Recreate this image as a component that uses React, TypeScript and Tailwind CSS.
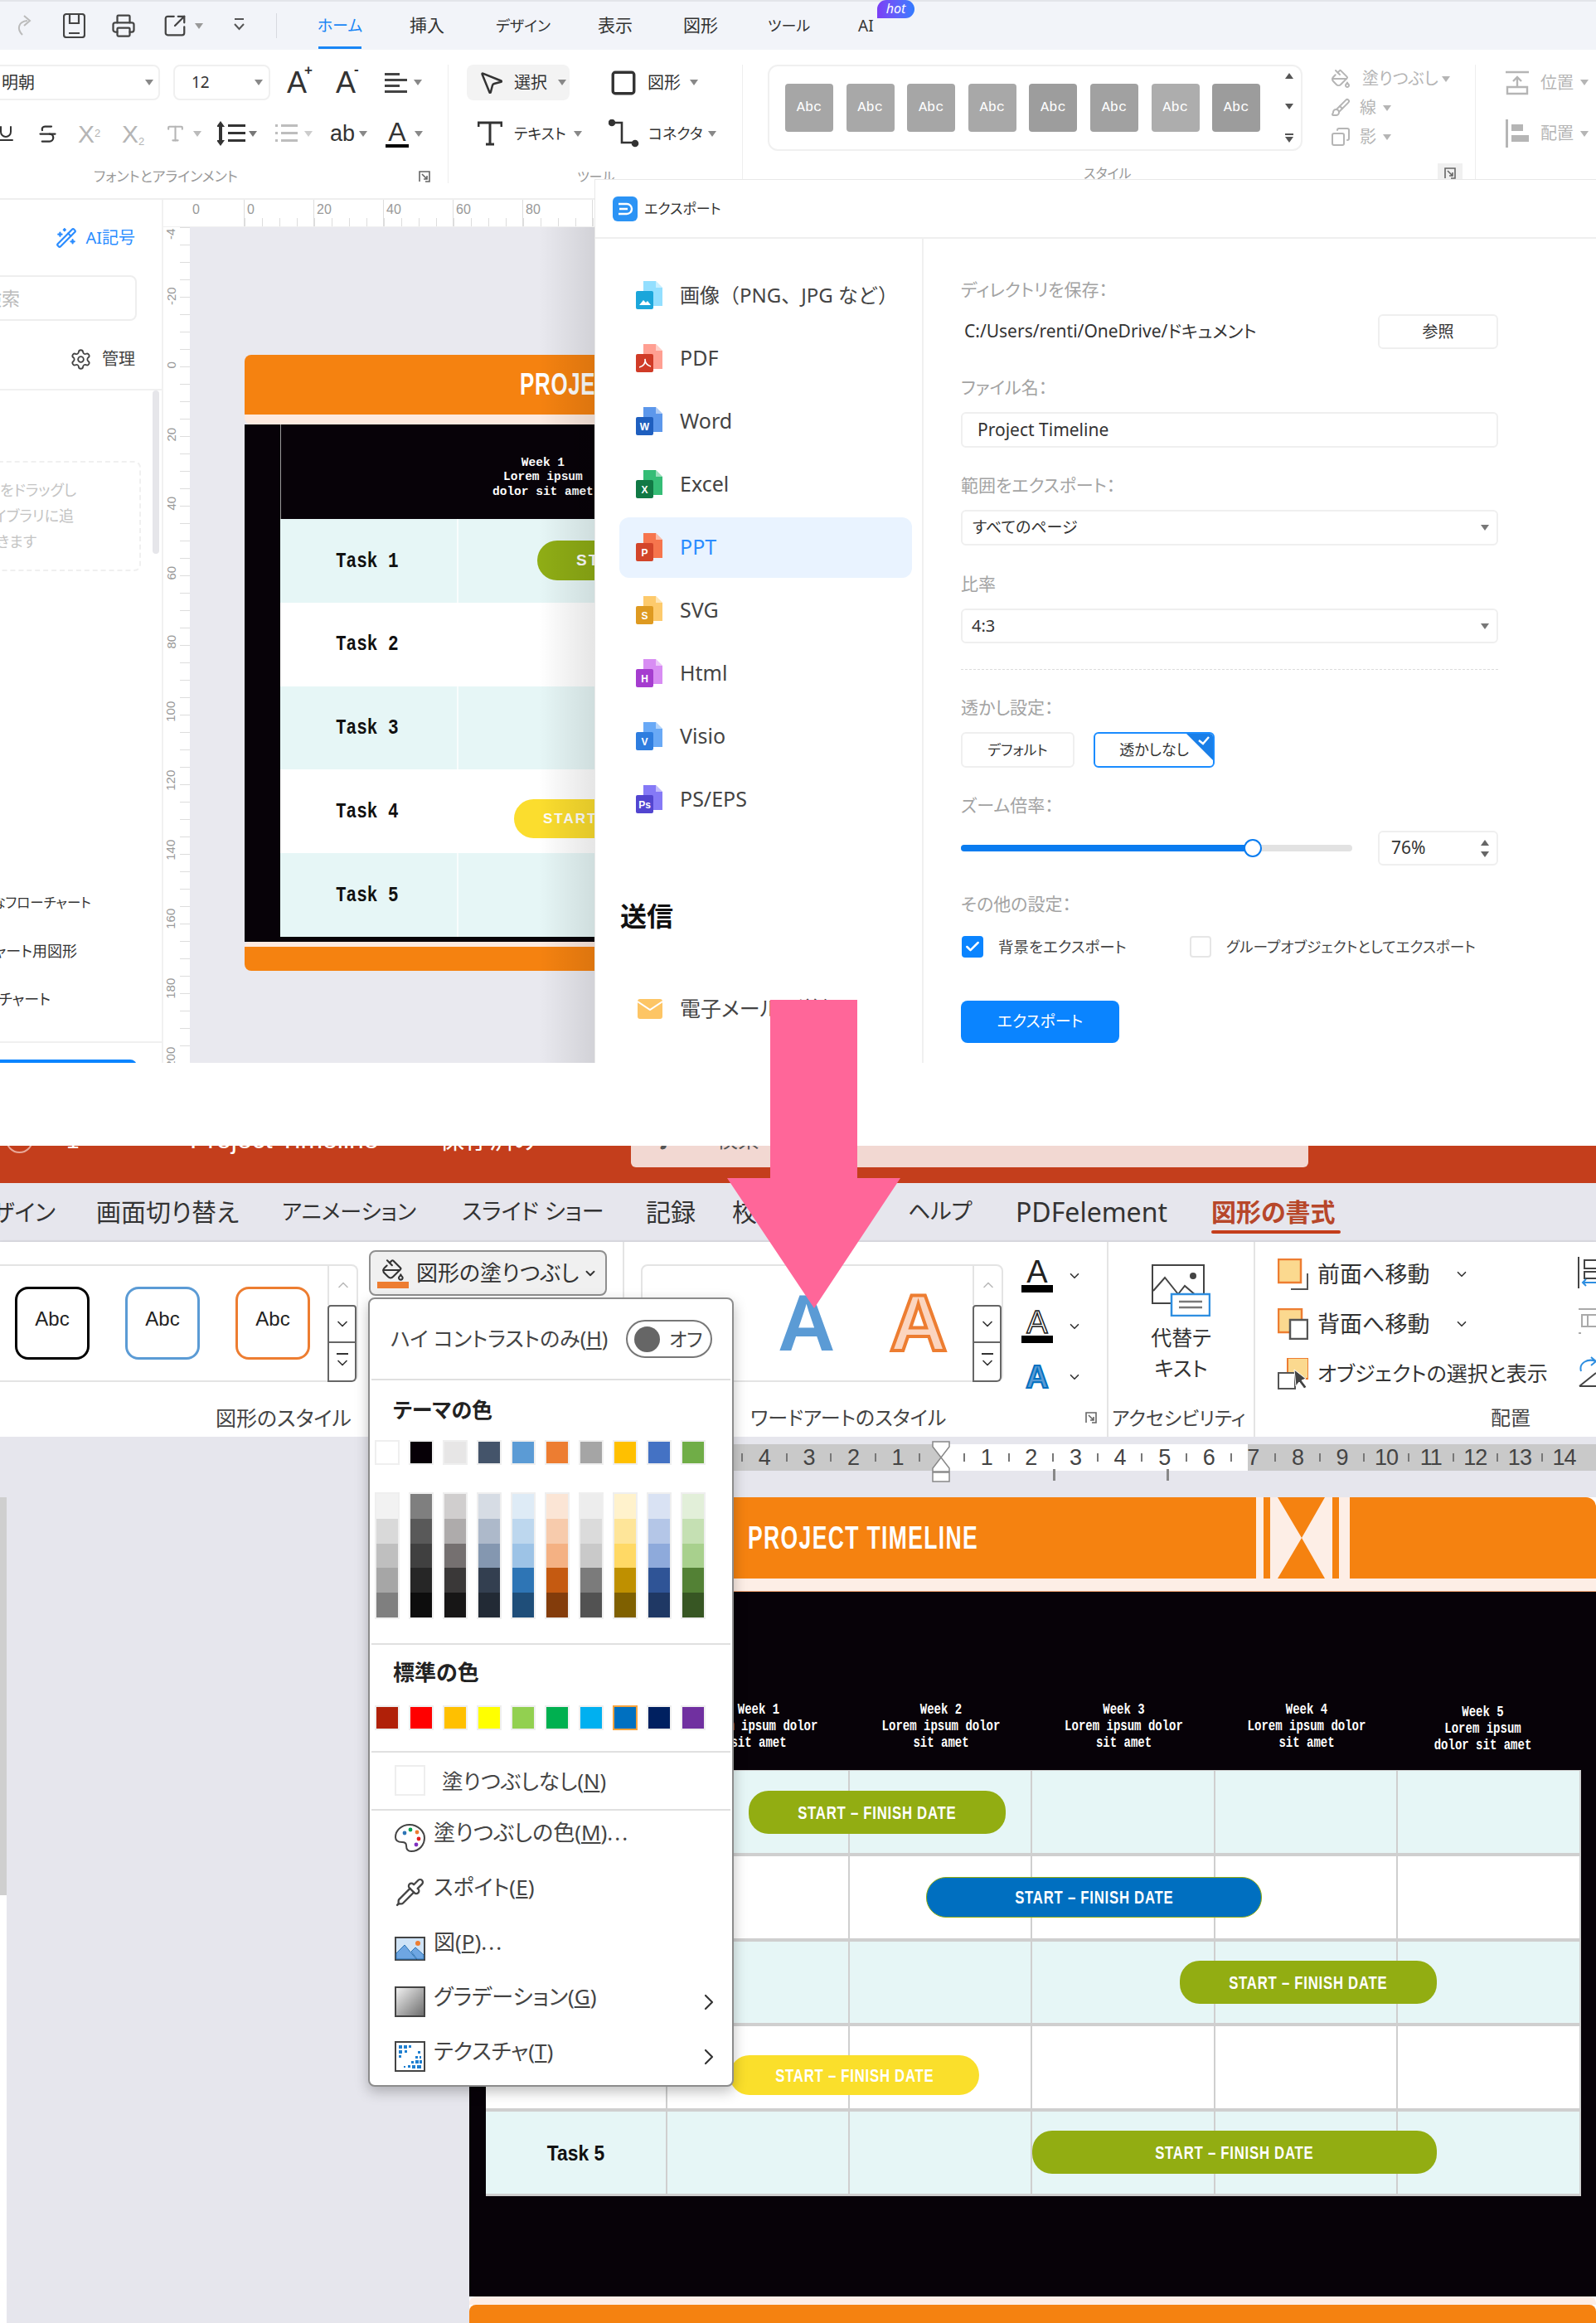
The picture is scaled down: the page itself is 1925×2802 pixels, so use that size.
import { ChevronDown, ChevronRight, ChevronUp, Pipette, Printer, Settings, SquareArrowOutUpRight, WandSparkles, Check, Strikethrough, Underline, MousePointer2, Square, Type, PaintBucket, Brush, Copy } from "lucide-react";
import clsx from "clsx";
import { ReactNode } from "react";

const Caret = ({ className }: { className?: string }) => (
  <svg width="10" height="7" viewBox="0 0 10 7" className={clsx("shrink-0", className)}>
    <path d="M0 0h10L5 7z" fill="currentColor" />
  </svg>
);

// squeezed display type used on the slide
const Cond = ({ children, className }: { children: ReactNode; className?: string }) => (
  <span className={clsx("inline-block whitespace-nowrap font-['Liberation_Sans'] font-bold", className)}>{children}</span>
);

const Launcher = ({ className }: { className?: string }) => (
  <svg width="16" height="16" viewBox="0 0 16 16" className={className} fill="none" stroke="#666" strokeWidth="1.6">
    <path d="M2 14V2h12v12H9" />
    <path d="M5 5l6 6M11 7v4H7" />
  </svg>
);

const FILES = [
  { name: "画像（PNG、JPG など）", back: "#93dfff", front: "#1ba6da", ch: "" },
  { name: "PDF", back: "#ff9f92", front: "#d03b27", ch: "" },
  { name: "Word", back: "#5c97eb", front: "#1f5fbf", ch: "W" },
  { name: "Excel", back: "#35bd76", front: "#117945", ch: "X" },
  { name: "PPT", back: "#f6754d", front: "#d2452a", ch: "P" },
  { name: "SVG", back: "#fdca6c", front: "#de9a21", ch: "S" },
  { name: "Html", back: "#d88df3", front: "#a53dcf", ch: "H" },
  { name: "Visio", back: "#69a9f6", front: "#2e7ddf", ch: "V" },
  { name: "PS/EPS", back: "#8579f6", front: "#5245d0", ch: "Ps" },
];

const FileIcon = ({ back, front, ch, name }: { back: string; front: string; ch: string; name: string }) => (
  <svg width="32" height="38" viewBox="0 0 32 38" className="shrink-0">
    <path d="M9 2h15l8 8v22H9z" fill={back} />
    <path d="M24 2l8 8h-8z" fill="#fff" opacity=".5" />
    <rect x="0" y="14" width="21" height="22" rx="2" fill={front} />
    <text x="10.5" y="30" textAnchor="middle" fontSize="12" fontWeight="700" fill="#fff" fontFamily="Liberation Sans">
      {ch}
    </text>
    {name === "PDF" && <path d="M4 30c5-1 8-5 7-10 0 5 3 8 7 9" stroke="#fff" strokeWidth="1.6" fill="none" />}
    {name.startsWith("画像") && <path d="M4 31l5-6 3 3 2-2 4 5z" fill="#fff" />}
  </svg>
);

const Label = ({ children, className }: { children: ReactNode; className?: string }) => (
  <div className={clsx("h-[24px] leading-[24px] text-[21px] text-[#a3a3a3] whitespace-nowrap", className)}>{children}</div>
);

const Box = ({ children, className }: { children?: ReactNode; className?: string }) => (
  <div className={clsx("flex items-center border-2 border-[#efefef] rounded-md text-[#333]", className)}>{children}</div>
);

const ExportDialog = () => (
  <div className="absolute left-[717px] top-[216px] right-0 bottom-0 bg-white border-l border-t border-[#e8e8e8] flex flex-col">
    <div className="h-[71px] shrink-0 border-b-2 border-[#efefef] flex items-center pl-[21px]">
      <svg width="30" height="30" viewBox="0 0 30 30">
        <rect width="30" height="30" rx="6" fill="#2b93f5" />
        <path d="M7 9h10a6 6 0 010 12H7M8 15h10" stroke="#fff" strokeWidth="2.4" fill="none" />
      </svg>
      <span className="ml-[8px] text-[17px] text-[#333]">エクスポート</span>
    </div>
    <div className="flex flex-1 min-h-0">
      <div className="w-[396px] shrink-0 border-r-2 border-[#f0f0f0] pt-[30px]">
        {FILES.map((f) => (
          <div key={f.name} className="h-[76px] flex items-center pl-[29px]">
            <div
              className={clsx(
                "w-[353px] h-[73px] rounded-xl flex items-center pl-[20px]",
                f.name === "PPT" && "bg-[#e9f3ff]"
              )}
            >
              <FileIcon back={f.back} front={f.front} ch={f.ch} name={f.name} />
              <span
                className={clsx(
                  "ml-[21px] whitespace-nowrap",
                  f.name === "PPT" ? "text-[#2a8cff]" : "text-[#444]",
                  f.name.startsWith("画像") ? "text-[24px] [font-feature-settings:normal]" : "text-[25px]"
                )}
              >
                {f.name}
              </span>
            </div>
          </div>
        ))}
        <div className="mt-[79px] ml-[30px] h-[48px] leading-[48px] text-[32px] font-bold text-[#111]">送信</div>
        <div className="mt-[50px] h-[76px] flex items-center pl-[51px]">
          <svg width="30" height="24" viewBox="0 0 30 24">
            <rect width="30" height="24" rx="3" fill="#fdc565" />
            <path d="M0 3l15 10L30 3" stroke="#fff" strokeWidth="2" fill="none" />
          </svg>
          <span className="ml-[21px] text-[25px] text-[#444] whitespace-nowrap">電子メールで送信</span>
        </div>
      </div>
      <div className="flex-1 pl-[45px] pt-[49px]">
        <div className="w-[648px]">
          <Label>ディレクトリを保存：</Label>
          <div className="mt-[18px] h-[42px] flex items-center">
            <span className="ml-[4px] text-[21px] text-[#333] whitespace-nowrap">C:/Users/renti/OneDrive/ドキュメント</span>
            <Box className="ml-auto w-[145px] h-[42px] justify-center text-[19px]">参照</Box>
          </div>
          <Label className="mt-[34px]">ファイル名：</Label>
          <Box className="mt-[18px] h-[43px] pl-[18px] text-[21px]">Project Timeline</Box>
          <Label className="mt-[33px]">範囲をエクスポート：</Label>
          <Box className="mt-[18px] h-[43px] pl-[12px] pr-[9px] justify-between text-[19px]">
            すべてのページ
            <Caret className="text-[#777]" />
          </Box>
          <Label className="mt-[34px]">比率</Label>
          <Box className="mt-[18px] h-[42px] pl-[11px] pr-[9px] justify-between text-[20px]">
            4:3
            <Caret className="text-[#777]" />
          </Box>
          <div className="mt-[31px] border-t border-dashed border-[#dcdcdc]" />
          <Label className="mt-[33px]">透かし設定：</Label>
          <div className="mt-[18px] flex gap-[23px]">
            <Box className="w-[137px] h-[43px] justify-center text-[17px]">デフォルト</Box>
            <div className="relative w-[146px] h-[43px] border-2 border-[#1a8cff] rounded-md flex items-center justify-center text-[18px] text-[#333] overflow-hidden">
              透かしなし
              <svg width="32" height="32" viewBox="0 0 32 32" className="absolute right-0 top-0">
                <path d="M0 0h32v32z" fill="#1a7fe8" />
                <path d="M15 8l5 4 7-8" stroke="#fff" strokeWidth="2.4" fill="none" />
              </svg>
            </div>
          </div>
          <Label className="mt-[33px]">ズーム倍率：</Label>
          <div className="mt-[19px] h-[42px] flex items-center">
            <div className="relative w-[472px] h-[8px] rounded-full bg-[#e2e2e2]">
              <div className="h-full w-[352px] rounded-full bg-[#0a7cf0]" />
              <div className="absolute left-[341px] top-[-7px] w-[22px] h-[22px] rounded-full bg-white border-2 border-[#0a7cf0]" />
            </div>
            <Box className="ml-auto w-[145px] h-[42px] pl-[14px] pr-[9px] justify-between text-[21px]">
              76%
              <span className="flex flex-col gap-[7px] text-[#666]">
                <Caret className="rotate-180" />
                <Caret />
              </span>
            </Box>
          </div>
          <Label className="mt-[34px]">その他の設定：</Label>
          <div className="mt-[27px] h-[26px] flex items-center text-[#444]">
            <span className="ml-[1px] w-[26px] h-[26px] rounded-[4px] bg-[#0a84ff] flex items-center justify-center">
              <Check size={20} color="#fff" strokeWidth={3} />
            </span>
            <span className="ml-[18px] w-[231px] whitespace-nowrap text-[18.5px]">背景をエクスポート</span>
            <span className="w-[26px] h-[26px] rounded-[4px] border-2 border-[#e6e6e6]" />
            <span className="ml-[18px] whitespace-nowrap text-[17.7px]">グループオブジェクトとしてエクスポート</span>
          </div>
          <div className="mt-[52px] w-[191px] h-[51px] rounded-lg bg-[#0a84ff] text-white text-[19px] flex items-center justify-center">
            エクスポート
          </div>
        </div>
      </div>
    </div>
  </div>
);

const TopBar = () => (
  <div className="h-[60px] bg-[#f2f4f9] border-t-2 border-[#e3e5ea] flex items-center relative text-[#333]">
    <svg width="22" height="26" viewBox="0 0 22 26" className="ml-[19px] text-[#bbb]" fill="none" stroke="currentColor" strokeWidth="2">
      <path d="M8 24C1 17 3 8 14 7M10 1l7 6-7 6" />
    </svg>
    <svg width="27" height="30" viewBox="0 0 27 30" className="ml-[35px]" fill="none" stroke="#444" strokeWidth="2.2">
      <path d="M4 1h19a3 3 0 013 3v22a3 3 0 01-3 3H4a3 3 0 01-3-3V4a3 3 0 013-3zM8 1v11h11V1M7 24h13" />
    </svg>
    <Printer size={30} strokeWidth={1.8} className="ml-[31px] text-[#444]" />
    <SquareArrowOutUpRight size={30} strokeWidth={1.8} className="ml-[32px] text-[#444]" />
    <Caret className="ml-[9px] text-[#999]" />
    <svg width="13" height="20" viewBox="0 0 13 20" className="ml-[37px]" fill="none" stroke="#555" strokeWidth="2">
      <path d="M1 2h11M1 8l5.5 6L12 8" />
    </svg>
    <div className="ml-[38px] w-px h-[30px] bg-[#d8dae0]" />
    <div className="ml-[50px] w-[52px] h-full relative flex items-center justify-center text-[19px] text-[#1a86f5] whitespace-nowrap">
      ホーム
      <span className="absolute left-0 right-0 bottom-[1px] h-[3px] bg-[#1a86f5]" />
    </div>
    <span className="ml-[58px] w-[45px] text-[21px] whitespace-nowrap">挿入</span>
    <span className="ml-[59px] w-[63px] text-[18px] whitespace-nowrap">デザイン</span>
    <span className="ml-[60px] w-[43px] text-[21px] whitespace-nowrap">表示</span>
    <span className="ml-[60px] w-[43px] text-[21px] whitespace-nowrap">図形</span>
    <span className="ml-[59px] w-[50px] text-[18px] whitespace-nowrap">ツール</span>
    <span className="ml-[59px] relative text-[19px]">
      AI
      <span className="absolute left-[23px] top-[-17px] w-[45px] h-[22px] rounded-t-full rounded-br-full bg-gradient-to-r from-[#7a3df5] to-[#2f7bff] text-white text-[16px] leading-[20px] italic text-center">
        hot
      </span>
    </span>
  </div>
);

const SWATCHES = ["#a6a6a6", "#a8a8a8", "#a6a6a6", "#a8a8a8", "#9d9d9d", "#a1a1a1", "#adadad", "#9c9c9c"];

const TopRibbon = () => (
  <div className="h-[181px] flex border-b-2 border-[#eeeeee] text-[#333] bg-white">
    <div className="w-[540px] shrink-0">
      <div className="mt-[18px] h-[43px] flex items-center">
        <div className="ml-[-10px] w-[203px] h-[43px] border-2 border-[#f0f0f0] rounded-lg flex items-center pl-[10px] pr-[6px] justify-between text-[20px]">
          明朝
          <Caret className="text-[#888]" />
        </div>
        <div className="ml-[16px] w-[117px] h-[43px] border-2 border-[#f0f0f0] rounded-lg flex items-center pl-[20px] pr-[7px] justify-between text-[19px]">
          12
          <Caret className="text-[#888]" />
        </div>
        <span className="ml-[20px] w-[30px] text-[36px] leading-none font-['Liberation_Sans'] relative">
          A<span className="absolute left-[21px] top-[-6px] text-[17px] font-bold">+</span>
        </span>
        <span className="ml-[29px] w-[29px] text-[36px] leading-none font-['Liberation_Sans'] relative">
          A<span className="absolute left-[22px] top-[-7px] text-[17px] font-bold">-</span>
        </span>
        <svg width="27" height="24" viewBox="0 0 27 24" className="ml-[30px]" fill="#444">
          <path d="M0 0h18v3H0zM0 7h27v3H0zM0 14h18v3H0zM0 21h27v3H0z" />
        </svg>
        <Caret className="ml-[8px] text-[#888]" />
      </div>
      <div className="mt-[20px] h-[40px] flex items-center">
        <Underline size={26} strokeWidth={2} className="ml-[-5px] w-[24px]" />
        <Strikethrough size={27} strokeWidth={2} className="ml-[25px]" />
        <span className="ml-[23px] w-[30px] text-[30px] text-[#b5b5b5] font-['Liberation_Sans'] whitespace-nowrap">
          X<sup className="text-[13px]">2</sup>
        </span>
        <span className="ml-[23px] w-[30px] text-[30px] text-[#b5b5b5] font-['Liberation_Sans'] whitespace-nowrap">
          X<sub className="text-[13px]">2</sub>
        </span>
        <Type size={28} className="ml-[22px] w-[25px] text-[#b5b5b5]" />
        <Caret className="ml-[9px] text-[#bbb]" />
        <svg width="34" height="32" viewBox="0 0 34 32" className="ml-[19px]" fill="#333">
          <path d="M13 5h21v3H13zM13 14h21v3H13zM13 23h21v3H13zM4 1l5 7H6v16h3l-5 7-5-7h3V8H-1z" />
        </svg>
        <Caret className="ml-[4px] text-[#777]" />
        <svg width="27" height="24" viewBox="0 0 27 24" className="ml-[22px]" fill="#bdbdbd">
          <path d="M0 1h3v3H0zM7 1h20v3H7zM0 10h3v3H0zM7 10h20v3H7zM0 19h3v3H0zM7 19h20v3H7z" />
        </svg>
        <Caret className="ml-[8px] text-[#ccc]" />
        <span className="ml-[21px] w-[28px] text-[27px] font-['Liberation_Sans']">ab</span>
        <Caret className="ml-[7px] text-[#888]" />
        <span className="ml-[22px] w-[28px] text-[32px] leading-[30px] font-['Liberation_Sans'] text-center border-b-[4px] border-black">A</span>
        <Caret className="ml-[7px] text-[#888]" />
      </div>
      <div className="mt-[20px] h-[24px] flex items-center">
        <span className="ml-[113px] w-[175px] text-[17px] text-[#999] whitespace-nowrap">フォントとアラインメント</span>
        <Launcher className="ml-[216px]" />
      </div>
    </div>
    <div className="w-px my-[18px] bg-[#eeeeee]" />
    <div className="w-[354px] shrink-0 pl-[22px]">
      <div className="mt-[18px] h-[43px] flex items-center">
        <div className="w-[124px] h-[43px] bg-[#f3f3f3] rounded-lg flex items-center pl-[13px]">
          <MousePointer2 size={33} strokeWidth={1.8} className="w-[33px]" />
          <span className="ml-[11px] w-[43px] text-[20px] whitespace-nowrap">選択</span>
          <Caret className="ml-[10px] text-[#888]" />
        </div>
        <Square size={34} strokeWidth={2.4} className="ml-[48px] w-[34px]" />
        <span className="ml-[12px] w-[42px] text-[20px] whitespace-nowrap">図形</span>
        <Caret className="ml-[9px] text-[#888]" />
      </div>
      <div className="mt-[20px] h-[40px] flex items-center">
        <svg width="30" height="30" viewBox="0 0 30 30" className="ml-[13px]" fill="none" stroke="#333" strokeWidth="3">
          <path d="M1 7V2h28v5M15 2v26M10 28h10" />
        </svg>
        <span className="ml-[14px] w-[62px] text-[18px] whitespace-nowrap">テキスト</span>
        <Caret className="ml-[10px] text-[#888]" />
        <svg width="37" height="34" viewBox="0 0 37 34" className="ml-[32px]" fill="none" stroke="#333" strokeWidth="2.6">
          <path d="M5 4h11v24h15" />
          <circle cx="4" cy="4" r="3" fill="#333" />
          <circle cx="32" cy="29" r="3" fill="#333" />
        </svg>
        <span className="ml-[11px] w-[64px] text-[18px] whitespace-nowrap">コネクタ</span>
        <Caret className="ml-[8px] text-[#888]" />
      </div>
      <div className="mt-[20px] ml-[133px] h-[24px] text-[16px] text-[#999]">ツール</div>
    </div>
    <div className="w-px my-[18px] bg-[#eeeeee]" />
    <div className="w-[883px] shrink-0">
      <div className="mt-[18px] h-[104px] flex">
        <div className="ml-[30px] w-[645px] h-[104px] border-2 border-[#f0f0f0] rounded-xl flex items-center pl-[19px]">
          <div className="flex gap-[15.6px]">
            {SWATCHES.map((c, i) => (
              <div
                key={i}
                className="w-[58px] h-[58px] rounded-[4px] flex items-center justify-center text-[17px] text-white font-['Liberation_Mono']"
                style={{ backgroundColor: c }}
              >
                Abc
              </div>
            ))}
          </div>
          <div className="ml-auto mr-[9px] h-[84px] flex flex-col justify-between items-center text-[#555]">
            <Caret className="rotate-180" />
            <Caret />
            <span className="flex flex-col items-center gap-[2px]">
              <span className="w-[10px] h-[2px] bg-[#555]" />
              <Caret />
            </span>
          </div>
        </div>
        <div className="ml-[34px] h-[104px] flex flex-col text-[#b5b5b5]">
          <div className="h-[34px] flex items-center">
            <PaintBucket size={26} className="w-[24px]" />
            <span className="ml-[14px] text-[20px] whitespace-nowrap w-[86px]">塗りつぶし</span>
            <Caret className="ml-[10px]" />
          </div>
          <div className="h-[36px] flex items-center">
            <Brush size={24} className="w-[24px]" />
            <span className="ml-[11px] text-[20px] w-[21px]">線</span>
            <Caret className="ml-[7px]" />
          </div>
          <div className="h-[34px] flex items-center">
            <Copy size={24} className="w-[24px] -scale-x-100" />
            <span className="ml-[11px] text-[20px] w-[21px]">影</span>
            <Caret className="ml-[7px]" />
          </div>
        </div>
      </div>
      <div className="mt-[15px] h-[24px] flex">
        <span className="ml-[411px] w-[63px] text-[16px] text-[#999] whitespace-nowrap">スタイル</span>
        <div className="ml-[364px] w-[30px] h-[24px] bg-[#f0f0f0] flex items-center justify-center">
          <Launcher />
        </div>
      </div>
    </div>
    <div className="w-px my-[18px] bg-[#eeeeee]" />
    <div className="flex-1 pl-[36px] text-[#b5b5b5]">
      <div className="mt-[18px] h-[43px] flex items-center">
        <svg width="28" height="30" viewBox="0 0 28 30" fill="none" stroke="currentColor" strokeWidth="2.4">
          <path d="M0 2h28M14 8v12M9 13l5-5 5 5M2 20h24v8H2z" />
        </svg>
        <span className="ml-[14px] w-[45px] text-[20px] whitespace-nowrap">位置</span>
        <Caret className="ml-[3px]" />
      </div>
      <div className="mt-[20px] h-[40px] flex items-center">
        <svg width="28" height="34" viewBox="0 0 28 34" fill="currentColor">
          <path d="M0 0h3v34H0zM7 6h14v8H7zM7 19h21v8H7z" />
        </svg>
        <span className="ml-[14px] w-[45px] text-[20px] whitespace-nowrap">配置</span>
        <Caret className="ml-[3px]" />
      </div>
    </div>
  </div>
);

const LeftPanel = () => (
  <div className="w-[197px] shrink-0 border-r-2 border-[#f1f1f1] bg-white relative overflow-hidden">
    <div className="mt-[34px] h-[24px] flex justify-end items-center pr-[32px] text-[#2a8cff] text-[20px]">
      <WandSparkles size={26} className="mr-[10px]" />
      AI記号
    </div>
    <div className="mt-[33px] ml-[-40px] w-[205px] h-[55px] border-2 border-[#eeeeee] rounded-lg flex items-center pl-[18px] text-[22px] text-[#bbbbbb]">
      検索
    </div>
    <div className="mt-[34px] h-[24px] flex justify-end items-center pr-[32px] text-[#444] text-[20px]">
      <Settings size={27} strokeWidth={1.6} className="mr-[12px]" />
      管理
    </div>
    <div className="mt-[24px] h-[2px] bg-[#f0f0f0]" />
    <div className="mt-[85px] ml-[-30px] w-[200px] h-[133px] border-2 border-dashed border-[#f0f0f0] rounded-lg flex flex-col justify-center items-end pr-[76px] text-[18px] leading-[31px] text-[#c4c4c4] whitespace-nowrap">
      <span>図形をドラッグし</span>
      <span className="mr-[3px]">てライブラリに追</span>
      <span className="self-start ml-[-11px]">加できます</span>
    </div>
    <div className="mt-[371px] text-[18px] text-[#333] whitespace-nowrap">
      <div className="h-[58px] flex items-center justify-end pr-[85px] text-[16.5px]">基本的なフローチャート</div>
      <div className="h-[58px] flex items-center justify-end pr-[102px]">チャート用図形</div>
      <div className="h-[59px] flex items-center justify-end pr-[134px]">チャート</div>
    </div>
    <div className="mt-[21px] h-[2px] bg-[#f0f0f0]" />
    <div className="mt-[20px] ml-[-10px] w-[175px] h-[10px] rounded-t-lg bg-[#0a84ff]" />
    <div className="absolute left-[184px] top-[230px] w-[8px] h-[197px] rounded-full bg-[#e6e6ea]" />
  </div>
);

const V_LABELS = ["-20", "0", "20", "40", "60", "80", "100", "120", "140", "160", "180", "200"];
const H_LABELS = ["0", "20", "40", "60", "80", "100"];

const VRuler = () => (
  <div className="w-[32px] shrink-0 bg-white flex overflow-hidden">
    <div className="w-[20px] shrink-0 text-[15px] text-[#999] font-['Liberation_Sans']">
      <div className="h-[16px] flex items-center justify-center">
        <span className="-rotate-90">-4</span>
      </div>
      <div className="mt-[25px]" />
      {V_LABELS.map((l) => (
        <div key={l} className="h-[83.5px] flex items-center justify-center">
          <span className="-rotate-90">{l}</span>
        </div>
      ))}
    </div>
    <div className="flex-1 bg-[repeating-linear-gradient(to_bottom,#dddddd_0,#dddddd_1px,transparent_1px,transparent_21px)]" />
  </div>
);

const HRuler = () => (
  <div className="h-[33px] bg-white flex overflow-hidden border-b border-[#f0f0f0]">
    <div className="w-[32px] shrink-0" />
    <div className="w-[65px] shrink-0 pl-[3px] text-[16px] text-[#999] font-['Liberation_Sans']">0</div>
    {H_LABELS.map((l) => (
      <div key={l} className="w-[84px] shrink-0 border-l border-[#dddddd] pl-[3px] text-[16px] text-[#999] font-['Liberation_Sans'] bg-[repeating-linear-gradient(to_right,#dddddd_0,#dddddd_1px,transparent_1px,transparent_21px)] bg-[length:100%_10px] bg-bottom bg-no-repeat">
        {l}
      </div>
    ))}
  </div>
);

const TOP_ROWS = ["Task 1", "Task 2", "Task 3", "Task 4", "Task 5"];

const TopSlide = () => (
  <div className="ml-[66px] mt-[154px] w-[800px] relative">
    <div className="h-[72px] bg-[#f58210] rounded-tl-lg flex items-center pl-[332px]">
      <Cond className="text-[37px] text-white tracking-[1px] scale-x-[0.7] origin-left">PROJECT TIMELINE</Cond>
    </div>
    <div className="h-[12px] bg-[#fdeadf] rounded-bl-lg" />
    <div className="bg-[#070208] pl-[43px]">
      <div className="h-[114px] border-l border-[#999] flex items-center pl-[255px] pt-[14px]">
        <div className="text-white text-[14.5px] leading-[17.5px] font-bold font-['Liberation_Mono'] text-center whitespace-nowrap">
          <div>Week 1</div>
          <div>Lorem ipsum</div>
          <div>dolor sit amet</div>
        </div>
      </div>
      {TOP_ROWS.map((t, i) => (
        <div key={t} className={clsx("h-[100.8px] flex relative", i % 2 === 0 ? "bg-[#e6f6f6]" : "bg-white")}>
          <div className="w-[215px] border-r-2 border-white/70 flex items-center pl-[67px] pt-[2px] text-[21px] font-bold font-['Liberation_Mono'] text-[#111] whitespace-pre">
            <span className="inline-block scale-y-125">{t}</span>
          </div>
          {i === 0 && (
            <div className="absolute left-[310px] top-[26px] w-[310px] h-[48px] rounded-full bg-[#8fad15] flex items-center pl-[47px] text-white font-bold text-[19px] tracking-[2px] font-['Liberation_Sans'] whitespace-nowrap">
              START - FINISH DATE
            </div>
          )}
          {i === 3 && (
            <div className="absolute left-[282px] top-[36px] w-[310px] h-[47px] rounded-full bg-[#fbdd2e] flex items-center pl-[35px] text-white font-bold text-[17px] tracking-[2px] font-['Liberation_Sans'] whitespace-nowrap">
              START - FINISH DATE
            </div>
          )}
        </div>
      ))}
      <div className="h-[6px]" />
    </div>
    <div className="h-[6px] bg-[#fdeadf] rounded-tl-lg" />
    <div className="h-[29px] bg-[#f58210] rounded-bl-lg" />
  </div>
);

const TopShot = () => (
  <div className="relative h-[1282px] overflow-hidden">
    <TopBar />
    <TopRibbon />
    <div className="flex h-[1041px]">
      <LeftPanel />
      <div className="flex-1 min-w-0 flex flex-col">
        <HRuler />
        <div className="flex flex-1 min-h-0">
          <VRuler />
          <div className="flex-1 bg-[#e9e9ef] overflow-hidden">
            <TopSlide />
          </div>
        </div>
      </div>
    </div>
    <div className="absolute left-[650px] w-[67px] top-[274px] bottom-0 bg-gradient-to-r from-transparent to-black/10" />
    <ExportDialog />
  </div>
);

const THEME = ["#ffffff", "#060006", "#e7e6e6", "#44546a", "#5b9bd5", "#ed7d31", "#a5a5a5", "#ffc000", "#4472c4", "#70ad47"];
const SHADES = [
  ["#f2f2f2", "#d9d9d9", "#bfbfbf", "#a6a6a6", "#7f7f7f"],
  ["#7f7f7f", "#595959", "#404040", "#262626", "#0d0d0d"],
  ["#d0cece", "#aeabab", "#757070", "#3a3838", "#171616"],
  ["#d6dce4", "#adb9ca", "#8497b0", "#333f50", "#222a35"],
  ["#deebf6", "#bdd7ee", "#9dc3e6", "#2e75b5", "#1f4e79"],
  ["#fbe5d5", "#f7cbac", "#f4b183", "#c55a11", "#833c0b"],
  ["#ededed", "#dbdbdb", "#c9c9c9", "#7b7b7b", "#525252"],
  ["#fff2cc", "#fee599", "#ffd965", "#bf9000", "#7f6000"],
  ["#d9e2f3", "#b4c6e7", "#8eaadb", "#2f5496", "#1f3864"],
  ["#e2efd9", "#c5e0b3", "#a8d08d", "#538135", "#375623"],
];
const STANDARD = ["#b02008", "#ff0000", "#ffc000", "#ffff00", "#92d050", "#00b050", "#00b0f0", "#0070c0", "#002060", "#7030a0"];

const MenuSep = ({ className }: { className?: string }) => <div className={clsx("h-[2px] mx-[2px] bg-[#e0e0e0]", className)} />;

const MenuRow = ({ icon, label, arrow }: { icon: ReactNode; label: ReactNode; arrow?: boolean }) => (
  <div className="h-[66px] flex items-center pl-[30px] pr-[12px]">
    <span className="w-[37px] h-[37px] shrink-0">{icon}</span>
    <span className="ml-[10px] pb-[12px] text-[26px] text-[#444] whitespace-nowrap">{label}</span>
    {arrow && <ChevronRight size={32} strokeWidth={1.6} className="ml-auto text-[#333]" />}
  </div>
);

const FillMenu = () => (
  <div className="absolute left-[444px] top-[183px] w-[441px] h-[952px] bg-white border-2 border-[#8c8c8c] rounded-lg shadow-[0_6px_16px_rgba(0,0,0,0.25)]">
    <div className="h-[96px] flex items-center pl-[25px] text-[25px] text-[#444]">
      <span className="w-[284px] whitespace-nowrap">
        ハイ コントラストのみ(<span className="underline">H</span>)
      </span>
      <span className="w-[104px] h-[46px] rounded-full border-2 border-[#777] flex items-center pl-[8px]">
        <span className="w-[31px] h-[31px] rounded-full bg-[#666]" />
        <span className="ml-[11px] text-[23px]">オフ</span>
      </span>
    </div>
    <MenuSep />
    <div className="mt-[19px] h-[32px] leading-[32px] pl-[28px] text-[25px] font-bold text-[#222]">テーマの色</div>
    <div className="mt-[21px] flex gap-[11px] pl-[6px]">
      {THEME.map((c) => (
        <div key={c} className="w-[30px] h-[30px] border-2 border-[#efefef]" style={{ backgroundColor: c }} />
      ))}
    </div>
    <div className="mt-[33px] flex gap-[11px] pl-[6px]">
      {SHADES.map((col, i) => (
        <div key={i} className="w-[30px] border-2 border-[#efefef]">
          {col.map((c) => (
            <div key={c} className="h-[29.8px]" style={{ backgroundColor: c }} />
          ))}
        </div>
      ))}
    </div>
    <MenuSep className="mt-[29px]" />
    <div className="mt-[17px] h-[32px] leading-[32px] pl-[28px] text-[26px] font-bold text-[#222]">標準の色</div>
    <div className="mt-[24px] flex gap-[11px] pl-[6px]">
      {STANDARD.map((c) => (
        <div
          key={c}
          className={clsx("w-[30px] h-[30px] border-2", c === "#0070c0" ? "border-[#f8a33c]" : "border-[#efefef]")}
          style={{ backgroundColor: c }}
        />
      ))}
    </div>
    <MenuSep className="mt-[25px]" />
    <div className="h-[68px] flex items-center pl-[30px]">
      <span className="w-[37px] h-[37px] border-2 border-[#eeeeee]" />
      <span className="ml-[20px] text-[25.5px] text-[#444] whitespace-nowrap">
        塗りつぶしなし(<span className="underline">N</span>)
      </span>
    </div>
    <MenuSep />
    <MenuRow
      icon={
        <svg viewBox="0 0 37 37" width="37" height="37" fill="none">
          <path d="M18 3C8 3 1 10 1 18c0 5 4 6 8 6 3 0 5 1 5 4 0 4 1 7 6 7 10 0 16-8 16-16S28 3 18 3z" stroke="#444" strokeWidth="2" />
          <circle cx="12" cy="13" r="2.4" fill="#2e75b5" />
          <circle cx="19" cy="9" r="2.4" fill="#00a050" />
          <circle cx="27" cy="12" r="2.4" fill="#ed7d31" />
          <circle cx="29" cy="20" r="2.4" fill="#e02020" />
          <circle cx="26" cy="27" r="2.4" fill="#8030c0" />
        </svg>
      }
      label={
        <>
          塗りつぶしの色(<span className="underline">M</span>)<span className="tracking-[2px]">...</span>
        </>
      }
    />
    <MenuRow
      icon={<Pipette size={37} strokeWidth={1.5} className="text-[#444]" />}
      label={
        <>
          スポイト(<span className="underline">E</span>)
        </>
      }
    />
    <MenuRow
      icon={
        <svg viewBox="0 0 37 29" width="37" height="29" className="mt-[6px]">
          <rect x="1" y="1" width="35" height="27" fill="#cfe3f6" stroke="#444" strokeWidth="2" />
          <path d="M2 27V20l10-10 14 17zM20 18l5-5 10 9v5h-8z" fill="#6ea6e2" stroke="#2e75b5" strokeWidth="1" />
          <circle cx="28" cy="8" r="3" fill="#ed7d31" />
        </svg>
      }
      label={
        <>
          図(<span className="underline">P</span>)<span className="tracking-[2px]">...</span>
        </>
      }
    />
    <MenuRow
      icon={
        <svg viewBox="0 0 37 37" width="37" height="37">
          <defs>
            <linearGradient id="gr" x1="0" y1="0" x2="1" y2="1">
              <stop offset="0" stopColor="#f4f4f4" />
              <stop offset="1" stopColor="#6a6a6a" />
            </linearGradient>
          </defs>
          <rect x="1" y="1" width="35" height="35" fill="url(#gr)" stroke="#444" strokeWidth="2" />
        </svg>
      }
      label={
        <>
          グラデーション(<span className="underline">G</span>)
        </>
      }
      arrow
    />
    <MenuRow
      icon={
        <svg viewBox="0 0 37 37" width="37" height="37">
          <rect x="1" y="1" width="35" height="35" fill="#fff" stroke="#444" strokeWidth="2" />
          <path
            d="M5 5h4v4H5zM11 5h4v4h-4zM17 5h3v3h-3zM5 11h4v4H5zM12 11h3v3h-3zM5 17h3v3H5zM28 12h3v3h-3zM25 18h3v3h-3zM30 18h2v3h-2zM20 24h3v3h-3zM25 23h4v4h-4zM30 23h3v4h-3zM11 30h2v2h-2zM16 29h3v3h-3zM21 29h4v4h-4zM27 29h5v4h-5z"
            fill="#1f7fd0"
          />
        </svg>
      }
      label={
        <>
          テクスチャ(<span className="underline">T</span>)
        </>
      }
      arrow
    />
  </div>
);

const ScrollCol = () => (
  <div className="w-[35px] shrink-0 ml-auto flex flex-col text-[#333]">
    <div className="h-[49px] flex items-center justify-center border-l-2 border-[#e4e4e4]">
      <ChevronUp size={20} className="text-[#bbb]" />
    </div>
    <div className="h-[46px] flex items-center justify-center border-2 border-[#666] rounded-t-sm">
      <ChevronDown size={20} />
    </div>
    <div className="h-[47px] flex flex-col items-center justify-center border-2 border-t-0 border-[#666] rounded-br-md">
      <span className="w-[14px] h-[2px] bg-[#333]" />
      <ChevronDown size={20} />
    </div>
  </div>
);

const TextIcon = ({ className, bar }: { className?: string; bar?: boolean }) => (
  <span className="w-[40px] flex flex-col items-center">
    <span className={clsx("text-[38px] leading-[32px] font-['Liberation_Sans']", className)}>A</span>
    {bar && <span className="w-[38px] h-[9px] bg-black" />}
  </span>
);

const BottomRibbon = () => (
  <div className="h-[235px] flex bg-white shadow-[0_2px_5px_rgba(0,0,0,0.2)] relative text-[#333]">
    <div className="w-[751px] shrink-0 flex flex-col">
      <div className="h-[197px] flex items-start">
        <div className="mt-[27px] w-[432px] h-[142px] border-y-2 border-r-2 border-[#e4e4e4] rounded-r-lg flex items-center">
          {[
            ["border-black", "ml-[18px]"],
            ["border-[#5b9bd5]", "ml-[43px]"],
            ["border-[#ed7d31]", "ml-[43px]"],
          ].map(([c, m]) => (
            <div key={c} className={clsx("w-[90px] h-[88px] rounded-2xl border-[3px] flex items-start pt-[18px] justify-center text-[24px] font-['Liberation_Sans'] text-[#222]", c, m)}>
              Abc
            </div>
          ))}
          <ScrollCol />
        </div>
        <div className="ml-[13px] mt-[10px] w-[287px] h-[55px] bg-[#f0f0f0] border-2 border-[#8f8f8f] rounded-lg flex items-center pl-[8px]">
          <span className="w-[38px] flex flex-col items-center">
            <PaintBucket size={28} strokeWidth={1.8} />
            <span className="w-[38px] h-[8px] bg-[#ed7d31]" />
          </span>
          <span className="ml-[9px] w-[191px] text-[26px] whitespace-nowrap">図形の塗りつぶし</span>
          <ChevronDown size={18} strokeWidth={2.5} className="ml-[10px]" />
        </div>
      </div>
      <div className="ml-[260px] text-[25px] leading-[30px] text-[#444] whitespace-nowrap">図形のスタイル</div>
    </div>
    <div className="w-[584px] shrink-0 flex flex-col border-l-2 border-[#e4e4e4]">
      <div className="h-[197px] flex items-start">
        <div className="ml-[20px] mt-[27px] w-[437px] h-[142px] border-y-2 border-x-2 border-[#e4e4e4] rounded-lg flex items-center">
          <span className="ml-[163px] w-[66px] text-[96px] leading-none font-['Liberation_Sans'] font-bold text-[#5b9bd5]">A</span>
          <span className="ml-[69px] text-[96px] leading-none font-['Liberation_Sans'] font-bold text-[#fbd5bf] [-webkit-text-stroke:4px_#ed7d31]">A</span>
          <ScrollCol />
        </div>
        <div className="ml-[21px] mt-[10px] flex flex-col">
          {[
            <TextIcon key="a" bar className="text-[#222]" />,
            <TextIcon key="b" bar className="text-[#fff] [-webkit-text-stroke:1.5px_#222]" />,
            <TextIcon key="c" className="font-bold text-[#5b9bd5] [-webkit-text-stroke:2px_#0070c0]" />,
          ].map((ic, i) => (
            <div key={i} className="h-[61px] flex items-center">
              {ic}
              <ChevronDown size={18} strokeWidth={2.2} className="ml-[16px]" />
            </div>
          ))}
        </div>
      </div>
      <div className="flex items-center h-[30px]">
        <span className="ml-[152px] w-[238px] text-[24px] text-[#444] whitespace-nowrap">ワードアートのスタイル</span>
        <Launcher className="ml-[165px]" />
      </div>
    </div>
    <div className="w-[177px] shrink-0 flex flex-col border-l-2 border-[#e4e4e4]">
      <div className="h-[197px] flex flex-col items-center">
        <svg width="71" height="63" viewBox="0 0 71 63" className="mt-[27px]" fill="none">
          <path d="M43 47H1V1h62v34" stroke="#444" strokeWidth="2" />
          <path d="M2 32l14-16 16 20 8-10 14 12" stroke="#444" strokeWidth="2" />
          <circle cx="50" cy="14" r="4" fill="#444" />
          <rect x="24" y="36" width="46" height="26" fill="#fff" stroke="#2e8ee0" strokeWidth="2.5" />
          <path d="M33 45h28M33 52h28" stroke="#777" strokeWidth="2.5" />
        </svg>
        <div className="mt-[7px] text-[25px] leading-[37px] text-center text-[#333]">
          <div>代替テ</div>
          <div>キスト</div>
        </div>
      </div>
      <div className="text-[23px] leading-[30px] text-[#444] whitespace-nowrap pl-[4px]">アクセシビリティ</div>
    </div>
    <div className="flex-1 flex flex-col border-l-2 border-[#e4e4e4] overflow-hidden">
      <div className="h-[197px] flex">
        <div className="w-[389px] shrink-0 pt-[9px] pl-[27px] text-[#333]">
          {[
            { label: "前面へ移動", chev: true, back: "front" },
            { label: "背面へ移動", chev: true, back: "behind" },
            { label: "オブジェクトの選択と表示", chev: false, back: "select" },
          ].map((r) => (
            <div key={r.label} className="h-[60px] flex items-center">
              <svg width="37" height="38" viewBox="0 0 37 38" className="shrink-0" fill="none">
                {r.back === "select" ? (
                  <>
                    <rect x="12" y="0" width="25" height="25" fill="#fbd98f" stroke="#ed7d31" strokeWidth="2" />
                    <rect x="1" y="18" width="20" height="19" fill="#fff" stroke="#555" strokeWidth="2" />
                    <path d="M20 14l2 20 4-5 6 8 3-2-6-8 5-2z" fill="#444" stroke="#fff" />
                  </>
                ) : r.back === "front" ? (
                  <>
                    <path d="M36 18v19H16" stroke="#555" strokeWidth="2" />
                    <rect x="1" y="1" width="27" height="28" fill="#fbd98f" stroke="#ed7d31" strokeWidth="2.5" />
                  </>
                ) : (
                  <>
                    <rect x="1" y="1" width="28" height="28" fill="#fbd98f" stroke="#ed7d31" strokeWidth="2.5" />
                    <rect x="15" y="14" width="21" height="23" fill="#fff" stroke="#555" strokeWidth="2.5" />
                  </>
                )}
              </svg>
              <span className={clsx("ml-[11px] whitespace-nowrap", r.chev ? "w-[165px] text-[27px]" : "text-[25px]")}>{r.label}</span>
              {r.chev && <ChevronDown size={18} strokeWidth={2.2} />}
            </div>
          ))}
        </div>
        <div className="pt-[18px] flex flex-col gap-[22px]">
          <svg width="24" height="38" viewBox="0 0 24 38" fill="none" stroke="#444" strokeWidth="2">
            <path d="M1 0v38M8 4h16v10H8zM8 18h16v8H8z" />
            <path d="M6 31h18M10 27l-4 4 4 4" stroke="#2e8ee0" />
          </svg>
          <svg width="24" height="38" viewBox="0 0 24 38" fill="none" stroke="#aaa" strokeWidth="2">
            <path d="M1 3h24M5 10h20v14H5zM12 10v14M1 32h3" />
          </svg>
          <svg width="24" height="38" viewBox="0 0 24 38" fill="none" stroke="#2e8ee0" strokeWidth="2">
            <path d="M4 18C1 8 12 2 22 6M16 1l6 5-6 5" />
            <path d="M2 36l20-16" stroke="#444" />
            <path d="M2 36h22" stroke="#444" />
          </svg>
        </div>
      </div>
      <div className="ml-[284px] text-[24px] leading-[30px] text-[#444]">配置</div>
    </div>
  </div>
);

// 0 is the blank slot that the indent marker sits on
const RULER = [4, 3, 2, 1, 0, 1, 2, 3, 4, 5, 6, 7, 8, 9, 10, 11, 12, 13, 14];

const Ruler = () => (
  <div className="relative h-[73px] bg-[#e6e6ed]">
    <div className="mt-[9px] ml-[885px] h-[32px] pl-[9px] flex bg-[linear-gradient(to_right,#c9c9c9_250px,#ffffff_250px,#ffffff_620px,#c9c9c9_620px)]">
      {RULER.map((n, i) => (
        <div key={i} className="w-[53.6px] shrink-0 flex items-center">
          <span className="w-[2px] h-[10px] bg-[#777] shrink-0" />
          <span className="flex-1 text-center text-[27px] tracking-[-1px] text-[#444] font-['Liberation_Sans']">{n > 0 ? n : ""}</span>
        </div>
      ))}
    </div>
    {/* indent markers sit over the ruler */}
    <svg width="22" height="50" viewBox="0 0 22 50" className="absolute left-[1124px] top-[5px]" fill="#fff" stroke="#888" strokeWidth="1.5">
      <path d="M1 1h20v6L11 20 1 7zM11 20l10 13v4H1v-4z" />
      <rect x="1" y="38" width="20" height="11" />
    </svg>
    <span className="absolute left-[1270px] top-[39px] w-[3px] h-[14px] bg-[#888]" />
    <span className="absolute left-[1407px] top-[39px] w-[3px] h-[14px] bg-[#888]" />
  </div>
);

const WEEKS = [
  ["Week 1", "Lorem ipsum dolor", "sit amet"],
  ["Week 2", "Lorem ipsum dolor", "sit amet"],
  ["Week 3", "Lorem ipsum dolor", "sit amet"],
  ["Week 4", "Lorem ipsum dolor", "sit amet"],
  ["Week 5", "Lorem ipsum", "dolor sit amet"],
];

const GRID = "grid grid-cols-[219px_220px_220px_221px_220px_221px]";

const Pill = ({ className }: { className: string }) => (
  <div className={clsx("absolute flex items-center justify-center text-white rounded-[24px]", className)}>
    <Cond className="text-[22px] scale-x-[0.76] tracking-[1px]">START – FINISH DATE</Cond>
  </div>
);

const BottomSlide = () => (
  <div className="flex-1 flex min-h-0">
    <div className="w-[566px] shrink-0 bg-[#e6e6ed]">
      <div className="w-[8px] h-[480px] bg-[#cfcfcf]" />
      <div className="w-[8px] h-[520px] bg-white" />
    </div>
    <div className="flex-1 flex flex-col relative">
      <div className="h-[98px] bg-[#f58210] rounded-tr-xl flex items-center pl-[336px] relative">
        <Cond className="text-[39px] text-white scale-x-[0.68] origin-left tracking-[2px]">PROJECT TIMELINE</Cond>
        <svg width="113" height="98" viewBox="0 0 113 98" className="absolute left-[949px] top-0" fill="#fdeee6">
          <path d="M0 0h9v98H0zM100 0h13v98h-13z" />
          <path d="M17 0h9l29 49-29 49h-9zM92 0h-9L55 49l28 49h9z" />
        </svg>
      </div>
      <div className="h-[16px] bg-[#fdeee6] border-b border-[#f0a070]" />
      <div className="h-[850px] bg-[#070208] pl-[20px]">
        <div className={clsx(GRID, "h-[215px] w-[1321px] text-white items-end pb-[23px]")}>
          <div />
          {WEEKS.map((w, i) => (
            <div key={i} className={clsx("text-center text-[14px] leading-[20px] font-bold font-['Liberation_Mono'] whitespace-nowrap", i === 4 && "pr-[16px] translate-y-[3px]")}>
              {w.map((l) => (
                <div key={l} className="scale-y-125">
                  {l}
                </div>
              ))}
            </div>
          ))}
        </div>
        <div className="relative w-[1321px]">
          {[0, 1, 2, 3, 4].map((r) => (
            <div key={r} className={clsx(GRID, "h-[102.8px] border-b-[3px] border-t border-[#cfcfcf]", r % 2 === 0 ? "bg-[#e6f6f6]" : "bg-white")}>
              <div className="border-r-2 border-[#cfcfcf] flex items-center justify-center text-[#111]">
                <Cond className="text-[24px] scale-x-[0.95] scale-y-110">Task {r + 1}</Cond>
              </div>
              {[0, 1, 2, 3, 4].map((c) => (
                <div key={c} className="border-r-2 border-[#cfcfcf]" />
              ))}
            </div>
          ))}
          <Pill className="left-[317px] top-[25px] w-[310px] h-[52px] bg-[#92ad12]" />
          <Pill className="left-[531px] top-[129px] w-[405px] h-[49px] bg-[#006fc0] border border-[#92ad12]" />
          <Pill className="left-[837px] top-[230px] w-[310px] h-[52px] bg-[#92ad12]" />
          <Pill className="left-[294px] top-[344px] w-[301px] h-[48px] bg-[#fadf2b]" />
          <Pill className="left-[659px] top-[435px] w-[488px] h-[52px] bg-[#92ad12]" />
        </div>
      </div>
      <div className="h-[10px] bg-[#fdeee6] rounded-t-lg" />
      <div className="flex-1 bg-[#f58210] rounded-t-lg" />
    </div>
  </div>
);

const BOTTOM_TABS = [
  { t: "デザイン", c: "w-[67px] justify-end text-[28px]" },
  { t: "画面切り替え", c: "ml-[49px] w-[171px] text-[30px]" },
  { t: "アニメーション", c: "ml-[53px] w-[159px] text-[26px]" },
  { t: "スライド ショー", c: "ml-[58px] w-[167px] text-[27px]" },
  { t: "記録", c: "ml-[55px] w-[61px] text-[30px]" },
  { t: "校閲", c: "ml-[43px] w-[60px] text-[30px]" },
  { t: "表示", c: "ml-[40px] w-[60px] text-[30px]" },
  { t: "ヘルプ", c: "ml-[52px] w-[75px] text-[27px]" },
  { t: "PDFelement", c: "ml-[55px] w-[184px] text-[32px]" },
];

const BottomShot = () => (
  <div className="relative h-[1420px] overflow-hidden flex flex-col">
    <div className="h-[45px] shrink-0 bg-[#c43e1c] flex items-start overflow-hidden text-white">
      <span className="ml-[7px] mt-[-24px] w-[33px] h-[33px] rounded-full border-2 border-[#e8a898] shrink-0" />
      <span className="ml-[40px] mt-[-22px] w-[20px] text-[28px] leading-[32px] font-['Liberation_Sans'] shrink-0">1</span>
      <span className="ml-[129px] mt-[-24px] w-[301px] text-[32px] leading-[32px] whitespace-nowrap font-['Liberation_Sans'] shrink-0">Project Timeline</span>
      <span className="mt-[-24px] w-[231px] text-[30px] leading-[32px] whitespace-nowrap shrink-0">保存済み</span>
      <div className="w-[817px] h-[26px] bg-[#f2d8d2] rounded-b-md text-[#555] flex items-start overflow-hidden shrink-0">
        <span className="ml-[29px] mt-[-24px] text-[26px] leading-[32px]">♪</span>
        <span className="ml-[48px] mt-[-24px] text-[26px] leading-[32px]">検索</span>
      </div>
    </div>
    <div className="h-[71px] shrink-0 bg-[#e6e6ed] flex items-center text-[#333] border-b-2 border-[#dcdce3]">
      {BOTTOM_TABS.map((b) => (
        <div key={b.t} className={clsx("flex shrink-0 whitespace-nowrap", b.c)}>
          {b.t}
        </div>
      ))}
      <div className="ml-[52px] relative w-[156px] text-[30px] font-bold text-[#b7472a] whitespace-nowrap">
        図形の書式
        <span className="absolute left-0 right-0 bottom-[-4px] h-[4px] rounded-full bg-[#c43e1c]" />
      </div>
    </div>
    <BottomRibbon />
    <Ruler />
    <BottomSlide />
    <FillMenu />
  </div>
);

export default function App() {
  return (
    <div className="relative w-[1925px] h-[2802px] overflow-hidden bg-white text-[#222] font-['Noto_Sans','Noto_Sans_CJK_JP',sans-serif] [font-feature-settings:'palt']">
      <TopShot />
      <div className="h-[100px]" />
      <BottomShot />
      <svg width="209" height="372" viewBox="0 0 209 372" className="absolute left-[877px] top-[1206px]">
        <path d="M52 0h105v215h52L105 372 0 215h52z" fill="#ff6699" />
      </svg>
    </div>
  );
}
